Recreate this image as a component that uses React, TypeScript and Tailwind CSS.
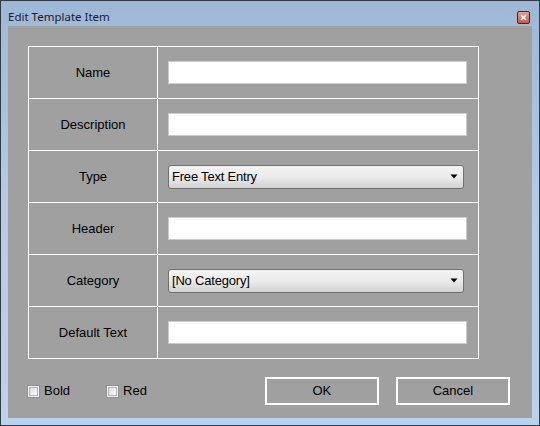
const rows: { label: string; kind: 'input' | 'select'; value?: string }[] = [
  { label: 'Name', kind: 'input' },
  { label: 'Description', kind: 'input' },
  { label: 'Type', kind: 'select', value: 'Free Text Entry' },
  { label: 'Header', kind: 'input' },
  { label: 'Category', kind: 'select', value: '[No Category]' },
  { label: 'Default Text', kind: 'input' },
];

function Checkbox({ label, className }: { label: string; className?: string }) {
  return (
    <div className={`flex items-center ${className ?? ''}`}>
      <div className="w-[13px] h-[13px] border border-[#8e8f8f] bg-[#f4f4f4] p-[1px]">
        <div className="w-full h-full border border-[#aeb3b9] bg-gradient-to-br from-[#dcdcdc] to-[#fbfbfb]" />
      </div>
      <span className="ml-[4px] text-[13px] text-black">{label}</span>
    </div>
  );
}

function Button({ label, className }: { label: string; className?: string }) {
  return (
    <div
      className={`w-[114px] h-[28px] border-2 border-white flex items-center justify-center text-[13px] text-black ${className ?? ''}`}
    >
      {label}
    </div>
  );
}

export default function App() {
  return (
    <div
      className="w-[540px] h-[426px] flex flex-col border border-[#333a44] bg-gradient-to-b from-[#9db8d6] via-[#b4cce6] to-[#bad2ec] overflow-hidden"
      style={{ fontFamily: '"Liberation Sans", Arial, sans-serif' }}
    >
      <div className="h-[25px] flex items-center justify-between pl-[7px] pr-[9px]">
        <span
          className="text-[11.5px] text-[#1b1b2a] pt-[7px]"
          style={{ fontFamily: '"Noto Sans", "DejaVu Sans", sans-serif' }}
        >
          Edit Template Item
        </span>
        <div className="mt-[8px] w-[13px] h-[13px] rounded-[2px] border border-[#5a1e1e] bg-gradient-to-b from-[#e8a090] to-[#c8564a] flex items-center justify-center">
          <svg width="7" height="7" viewBox="0 0 7 7">
            <path d="M1 1 L6 6 M6 1 L1 6" stroke="#ffffff" strokeWidth="1.6" />
          </svg>
        </div>
      </div>

      <div className="flex-1 mx-[7px] mb-[7px] bg-[#a0a0a0] pt-[20px] pl-[20px] flex flex-col">
        <div className="w-[451px] border-l border-t border-white">
          {rows.map((row) => (
            <div key={row.label} className="flex h-[52px]">
              <div className="w-[129px] border-r border-b border-white flex items-center justify-center text-[13px] text-black">
                {row.label}
              </div>
              <div className="w-[321px] border-r border-b border-white flex items-center pl-[10px]">
                {row.kind === 'input' ? (
                  <div className="w-[299px] h-[23px] border border-[#c9cdd3] bg-white" />
                ) : (
                  <div className="w-[296px] h-[24px] rounded-[3px] border border-[#707070] bg-gradient-to-b from-[#f3f3f3] via-[#ebebeb] to-[#d2d2d2] flex items-center justify-between pl-[3px] pr-[5px]">
                    <span className="text-[13px] text-black tracking-[-0.2px]">{row.value}</span>
                    <svg width="8" height="5" viewBox="0 0 8 5">
                      <path d="M0.5 0.5 H7.5 L4 4.5 Z" fill="#000000" />
                    </svg>
                  </div>
                )}
              </div>
            </div>
          ))}
        </div>

        <div className="flex items-center mt-[18px]">
          <Checkbox label="Bold" className="-ml-[1px]" />
          <Checkbox label="Red" className="ml-[36px]" />
          <Button label="OK" className="ml-[118px]" />
          <Button label="Cancel" className="ml-[17px]" />
        </div>
      </div>
    </div>
  );
}
